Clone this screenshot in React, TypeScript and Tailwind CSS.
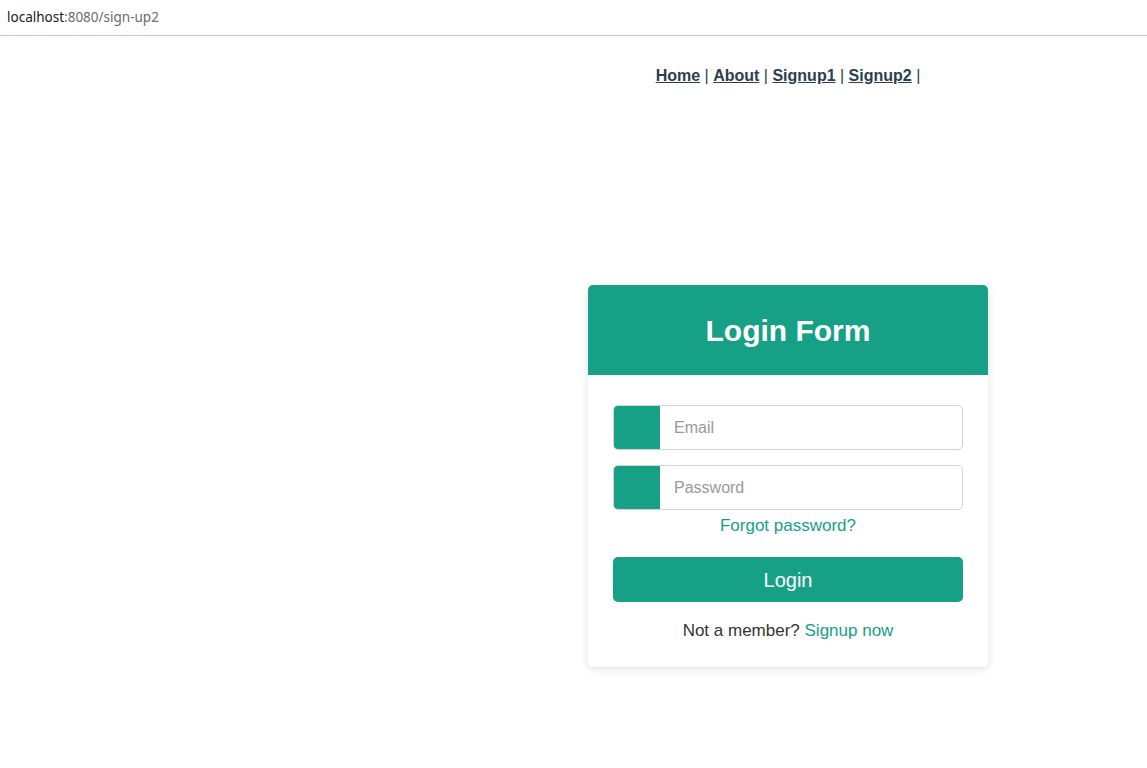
import { useState } from 'react';

const navLinks = ['Home', 'About', 'Signup1', 'Signup2'];

function AddressBar() {
  return (
    <div className="h-9 flex items-center px-[7px] border-b border-[#c8c8c8] bg-white font-['Noto_Sans',sans-serif] text-[13.5px]">
      <span className="text-[#1a1a1a]">localhost</span>
      <span className="text-[#6b6b6b]">:8080/sign-up2</span>
    </div>
  );
}

function Nav() {
  return (
    <nav className="pt-[31px] pb-[29px] text-center text-[16px] leading-[18px] text-[#2c3e50]">
      {navLinks.map((label) => (
        <span key={label}>
          <a href="#" className="font-bold underline">
            {label}
          </a>{' '}
          |{' '}
        </span>
      ))}
    </nav>
  );
}

function InputRow({ placeholder, type }: { placeholder: string; type: string }) {
  return (
    <div className="flex h-[45px] rounded-[5px] border border-[#d4d4d4] overflow-hidden">
      <div className="w-[46px] bg-[#16a085] shrink-0" />
      <input
        type={type}
        placeholder={placeholder}
        className="flex-1 min-w-0 pl-[14px] text-[16px] text-[#333] outline-none placeholder:text-[#999]"
      />
    </div>
  );
}

function LoginCard() {
  const [email, setEmail] = useState('');

  return (
    <div className="w-[400px] bg-white rounded-[5px] shadow-[0_2px_10px_rgba(0,0,0,0.12)] overflow-hidden">
      <div className="h-[90px] bg-[#16a085] flex items-center justify-center">
        <h1 className="text-white text-[30px] font-bold">Login Form</h1>
      </div>
      <form
        className="px-[25px] pt-[30px] pb-[26px]"
        onSubmit={(e) => {
          e.preventDefault();
          setEmail(email);
        }}
      >
        <InputRow placeholder="Email" type="email" />
        <div className="mt-[15px]">
          <InputRow placeholder="Password" type="password" />
        </div>
        <div className="text-center mt-[6px] leading-[20px]">
          <a href="#" className="text-[#16a085] text-[17px]">
            Forgot password?
          </a>
        </div>
        <button
          type="submit"
          className="mt-[21px] w-full h-[45px] rounded-[5px] bg-[#16a085] text-white text-[20px]"
        >
          Login
        </button>
        <p className="mt-[19px] text-center text-[17px] leading-[20px] text-[#333]">
          Not a member?{' '}
          <a href="#" className="text-[#16a085]">
            Signup now
          </a>
        </p>
      </form>
    </div>
  );
}

export default function App() {
  return (
    <div className="min-h-screen bg-white font-['Liberation_Sans',Arial,sans-serif]">
      <AddressBar />
      <div className="grid grid-cols-[429px_1fr]">
        <div />
        <div className="flex flex-col items-center">
          <Nav />
          <div className="mt-[171px]">
            <LoginCard />
          </div>
        </div>
      </div>
    </div>
  );
}
